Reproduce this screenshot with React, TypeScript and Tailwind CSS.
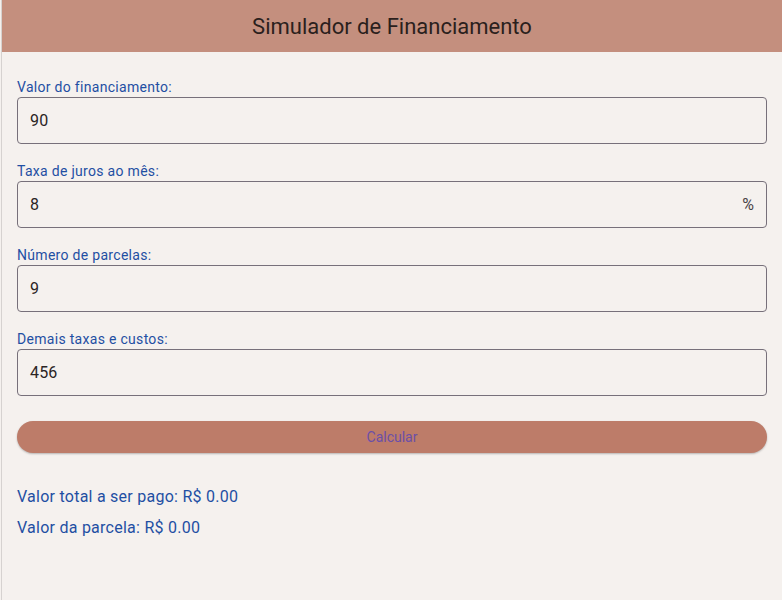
import type { FC } from "react"

interface FieldProps {
    label: string
    value: string
    suffix?: string
}

const Field: FC<FieldProps> = ({ label, value, suffix }) => {
    return (
        <div className="flex flex-col">
            <label className="h-5 text-[14px] leading-5 tracking-[0.3px] text-[#1f4fa3]">{label}</label>
            <div className="flex h-[47px] items-center rounded-[4px] border border-[#77707a] pl-3 pr-3">
                <span className="flex-1 text-[16px] tracking-[0.15px] text-[#2a2424]">{value}</span>
                {suffix && <span className="text-[16px] text-[#4a4446]">{suffix}</span>}
            </div>
        </div>
    )
}

const App: FC = () => {
    return (
        <div className="min-h-[600px] bg-[#f5f1ee] font-['Roboto',sans-serif]">
            <div className="ml-px min-h-[600px] border-l border-[#d6d2d0]">
                {/* top bar */}
                <div className="flex h-[52px] items-center justify-center bg-[#c48f7e]">
                    <h1 className="text-[22px] text-[#2b1f1d]">Simulador de Financiamento</h1>
                </div>

                <div className="flex flex-col px-[15px] pt-[25px]">
                    <div className="flex flex-col gap-[17px]">
                        <Field label="Valor do financiamento:" value="90" />
                        <Field label="Taxa de juros ao mês:" value="8" suffix="%" />
                        <Field label="Número de parcelas:" value="9" />
                        <Field label="Demais taxas e custos:" value="456" />
                    </div>

                    <button className="mt-[25px] h-[32px] rounded-full bg-[#bd7c69] text-[14px] text-[#6b4fa8] shadow-[0_1px_2px_rgba(0,0,0,0.25)]">
                        Calcular
                    </button>

                    <div className="mt-[32px] flex flex-col gap-[7px] text-[16px] leading-6 tracking-[0.25px] text-[#1f4fa3]">
                        <p>Valor total a ser pago: R$ 0.00</p>
                        <p>Valor da parcela: R$ 0.00</p>
                    </div>
                </div>
            </div>
        </div>
    )
}

export default App
